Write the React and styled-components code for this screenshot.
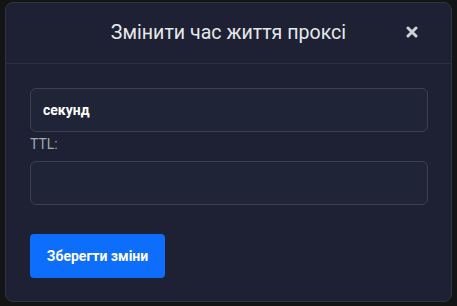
import React from "react";
import styled, { createGlobalStyle } from "styled-components";

const Global = createGlobalStyle`
  html, body { margin: 0; padding: 0; background: #141414; }
  body { font-family: Roboto, "Noto Sans", sans-serif; }
  * { box-sizing: border-box; }
`;

const Backdrop = styled.div`
  width: 457px;
  height: 306px;
  padding: 2px 5px 0 5px;
  background: #141414;
`;

const Modal = styled.div`
  width: 447px;
  height: 300px;
  background: #1d2133;
  border: 1px solid #2e3446;
  border-radius: 8px;
  display: flex;
  flex-direction: column;
`;

const Header = styled.div`
  height: 61px;
  border-bottom: 1px solid #2a3042;
  display: flex;
  align-items: center;
  justify-content: center;
  position: relative;
`;

const Title = styled.h5`
  margin: 0;
  font-size: 19.6px;
  font-weight: 400;
  color: #e6e8ec;
  line-height: 24px;
`;

const Close = styled.button`
  position: absolute;
  right: 32px;
  top: 22px;
  width: 14px;
  height: 14px;
  padding: 0;
  border: 0;
  background: transparent;
  display: flex;
  align-items: center;
  justify-content: center;
`;

const Body = styled.div`
  padding: 24px 24px 0 24px;
  display: flex;
  flex-direction: column;
`;

const Input = styled.div`
  width: 398px;
  height: 44px;
  background: #1f2437;
  border: 1px solid #394052;
  border-radius: 6px;
  display: flex;
  align-items: center;
  padding: 0 12px;
  font-size: 14px;
  font-weight: 700;
  color: #ffffff;
`;

const Label = styled.label`
  margin: 4px 0 8px 0;
  font-size: 14px;
  line-height: 17px;
  color: #a3a8b3;
`;

const Button = styled.button`
  margin-top: 29px;
  width: 135px;
  height: 44px;
  background: #0d6efd;
  border: 0;
  border-radius: 4px;
  color: #ffffff;
  font-family: Roboto, sans-serif;
  font-size: 14px;
  font-weight: 700;
  align-self: flex-start;
`;

export default function App() {
  return (
    <>
      <Global />
      <Backdrop>
        <Modal>
          <Header>
            <Title>Змінити час життя проксі</Title>
            <Close aria-label="close">
              <svg width="12" height="12" viewBox="0 0 12 12">
                <path d="M2 2 L10 10 M10 2 L2 10" stroke="#cdd1d9" strokeWidth="3" strokeLinecap="round" />
              </svg>
            </Close>
          </Header>
          <Body>
            <Input>секунд</Input>
            <Label>TTL:</Label>
            <Input />
            <Button>Зберегти зміни</Button>
          </Body>
        </Modal>
      </Backdrop>
    </>
  );
}
